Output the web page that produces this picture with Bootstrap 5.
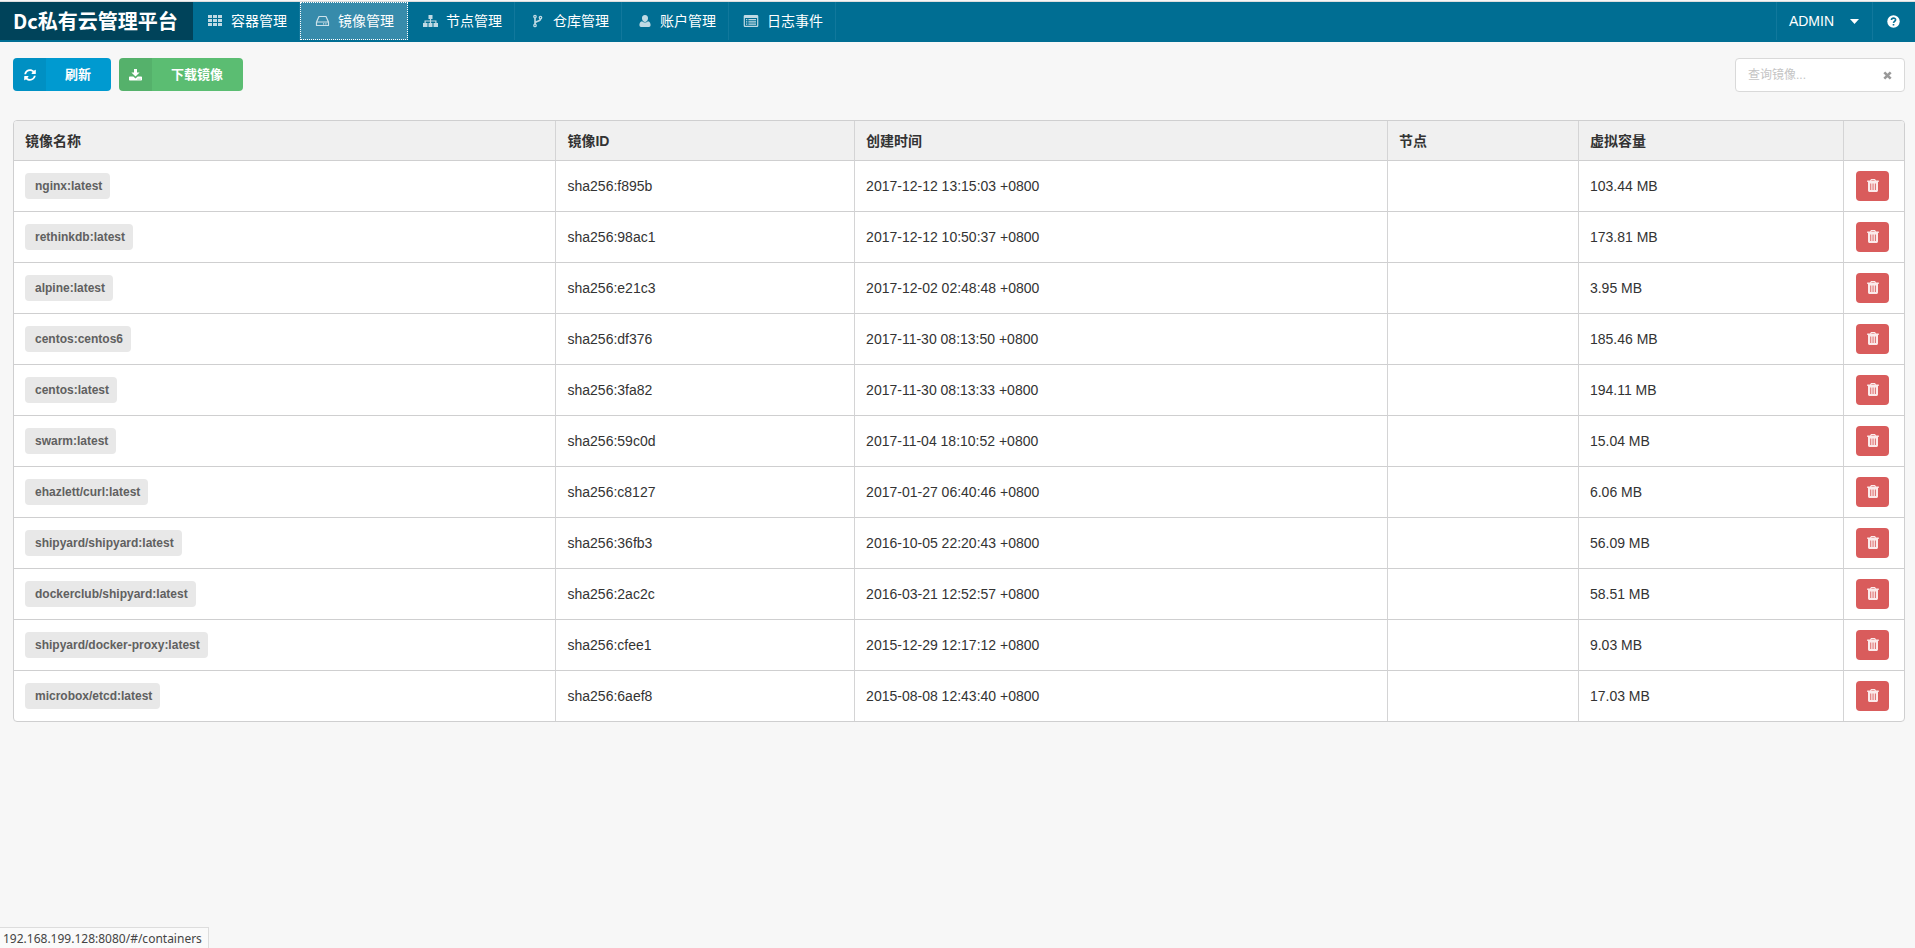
<!DOCTYPE html>
<html lang="zh-CN">
<head>
<meta charset="utf-8">
<meta name="viewport" content="width=device-width, initial-scale=1">
<title>Dc私有云管理平台</title>
<link href="https://cdn.jsdelivr.net/npm/bootstrap@5.3.0/dist/css/bootstrap.min.css" rel="stylesheet">
<style>
body{background:#f7f7f7;color:#333;font:14px/20px "Liberation Sans","Noto Sans CJK SC",sans-serif}
svg{fill:currentColor;flex:none}
.topbar{background:#006e93;border-top:1px solid #ddd;height:41px;padding-bottom:2px;color:#fff;margin-top:1px}
.topbar a,.topbar button{color:#fff;text-decoration:none}
.topbar .brand{background:#00435a;font:bold 20px/38px "Noto Sans CJK SC",sans-serif;padding:0 13px;width:193px;white-space:nowrap}
.menu-item{padding:0 12px 0 14px;gap:7px;border:0 solid #11789c;border-right-width:1px;white-space:nowrap}
.menu-item svg{width:17px;height:14px;opacity:.75}
.menu-item.active{background:#378bab;border:1px dotted #fff;padding:0 13px}
.menu-user{background:none;border:0 solid #11789c;border-left-width:1px;padding:0 13px 0 12px;gap:16px}
.menu-help{border-left:1px solid #11789c;padding:0 15px 0 14px}
.page{padding:16px 10px 0 13px}
.act{border:0;border-radius:4px;color:#fff;font-weight:bold;font-size:13px;height:33px;padding:0;overflow:hidden;line-height:33px}
.act .ico{width:33px;height:33px;background:rgba(0,0,0,.06)}
.act .txt{padding:0 20px 0 19px}
.act-blue{background:#009ad0}.act-green{background:#5bbd72}
.finder{width:170px;height:34px;border:1px solid #d9d9d9;border-radius:4px;background:#fff;padding:0 12px}
.finder input{border:0;outline:0;padding:0;font-size:12px;min-width:0;background:none}
.finder input::placeholder{color:#c4c4c4}
.finder button{border:0;background:none;padding:0;color:#999}
.frame{margin-top:28px;border:1px solid #cfcfd0;border-radius:4px;background:#fff;overflow:hidden}
.grid{table-layout:fixed;width:100%;border-collapse:separate;border-spacing:0}
.grid th,.grid td{padding:0 11px;border-left:1px solid #d4d4d5;border-top:1px solid #cfcfd0;height:51px}
.grid th{height:39px;background:#f0f0f0;border-top:0}
.grid th:first-child,.grid td:first-child{border-left:0}
.grid td:last-child{padding-left:12px}
.c-name{width:28.65%}.c-id{width:15.8%}.c-time{width:28.2%}.c-node{width:10.1%}.c-act{width:61px}
.tag{display:inline-block;background:#e8e8e8;color:#606060;border-radius:4px;font-weight:bold;font-size:12px;line-height:26px;padding:0 8px 0 10px;vertical-align:middle}
.del{display:flex;align-items:center;justify-content:center;width:33px;height:30px;border:0;border-radius:4px;background:#d95c5c;color:#fbeaea;padding:0 0 2px}
.statusline{left:0;bottom:0;height:21px;background:#fafafa;border:1px solid #ddd;border-width:1px 1px 0 0;font:12px/22px "Noto Sans",sans-serif;color:#444;padding:0 6px 0 3px}
</style>
</head>
<body>
<svg class="d-none" xmlns="http://www.w3.org/2000/svg">
<symbol id="trash" viewBox="0 0 12 13"><path fill-rule="evenodd" d="M4 0h4l1 1.6h2.8v1.3H11V11.6Q11 13 9.700 13H2.300Q1 13 1 11.600V2.900H.2V1.600H3zM4.600 1 4.200 1.600H7.800L7.400 1zM3.300 4.500V11h.9V4.500zM5.600 4.500V11h.9V4.500zM7.900 4.500V11h.9V4.500z"/></symbol>
</svg>
<header class="topbar d-flex align-items-stretch">
<a class="brand" href="#/">Dc私有云管理平台</a>
<nav class="d-flex flex-grow-1" aria-label="主菜单">
<a class="menu-item d-flex align-items-center" href="#/containers"><svg viewBox="0 0 17 14"><path d="M1 1h4v3H1zm5 0h4v3H6zm5 0h4v3h-4zM1 5h4v3H1zm5 0h4v3H6zm5 0h4v3h-4zM1 9h4v3H1zm5 0h4v3H6zm5 0h4v3h-4z"/></svg>容器管理</a>
<a class="menu-item active d-flex align-items-center" href="#/images" aria-current="page"><svg viewBox="0 0 17 14"><path d="M2.500 8 5 2.500H12L14.500 8V11.500H2.500V8H14.500" fill="none" stroke="currentColor" stroke-width="1.200" stroke-linejoin="round"/><path d="M9 9.200h1.200v1.200H9zm2.300 0h1.200v1.200h-1.200z"/></svg>镜像管理</a>
<a class="menu-item d-flex align-items-center" href="#/nodes"><svg viewBox="0 0 17 14"><path d="M6.500 1h4v4H9.100v1.400h5.400V9H16v4h-4.500V9h1.800V7.600H9.100V9h1.400v4h-4V9h1.400V7.600H3.700V9h1.800v4H1V9h1.500V6.400h5.400V5H6.500z"/></svg>节点管理</a>
<a class="menu-item d-flex align-items-center" href="#/registries"><svg viewBox="0 0 17 14" fill="none"><g fill="none" stroke="currentColor" stroke-width="1.300"><circle cx="6" cy="2.600" r="1.200"/><circle cx="6" cy="11.400" r="1.200"/><circle cx="11.500" cy="3.600" r="1.200"/><path d="M6 4v6M11.500 5C11.500 8 6 6.500 6 9.600" stroke-width="1.600"/></g></svg>仓库管理</a>
<a class="menu-item d-flex align-items-center" href="#/accounts"><svg viewBox="0 0 17 14"><path d="M9 1C11 1 12.200 2.500 12 4.500 11.800 6.500 10.500 8 9 8S6.200 6.500 6 4.500C5.800 2.500 7 1 9 1zM6 7.200Q9 10 12 7.200C14 7.600 14.600 9.500 14.600 11.300Q14.500 13 13 13H5Q3.500 13 3.400 11.300C3.400 9.500 4 7.600 6 7.200z"/></svg>账户管理</a>
<a class="menu-item d-flex align-items-center" href="#/events"><svg viewBox="0 0 17 14"><path fill-rule="evenodd" d="M2 1h12q1.300 0 1.300 1.300v9.400Q15.300 13 14 13H2Q.7 13 .7 11.700V2.300Q.7 1 2 1zM1.900 4v7.800h12.200V4zM3 5h1.300v1.200H3zm2.400 0H13v1.200H5.400zM3 7.300h1.300v1.200H3zm2.400 0H13v1.200H5.400zM3 9.600h1.300v1.200H3zm2.400 0H13v1.200H5.400z"/></svg>日志事件</a>
</nav>
<button class="menu-user d-flex align-items-center" type="button">ADMIN<svg width="9" height="5" viewBox="0 0 9 5"><path d="M0 0h9L4.500 5z"/></svg></button>
<a class="menu-help d-flex align-items-center" href="#/help" aria-label="帮助"><svg width="13" height="13" viewBox="0 0 13 13"><circle cx="6.500" cy="6.500" r="6.200"/><path d="M4.400 5C4.600 2.500 8.700 2.600 8.600 4.900 8.500 6.400 6.600 6.200 6.500 7.900M6.500 9v1.600" fill="none" stroke="#006e93" stroke-width="1.600"/></svg></a>
</header>
<main class="page">
<div class="d-flex justify-content-between align-items-start">
<div class="d-flex gap-2">
<button class="act act-blue d-flex" type="button"><span class="ico d-flex align-items-center justify-content-center"><svg width="12" height="12" viewBox="0 0 512 512"><path d="M370.720 133.280C339.458 104.008 298.888 87.962 255.848 88c-77.458.068-144.328 53.178-162.791 126.850-1.344 5.363-6.122 9.150-11.651 9.150H24.103c-7.498 0-13.194-6.807-11.807-14.176C33.933 94.924 134.813 8 256 8c66.448 0 126.791 26.136 171.315 68.685L463.030 40.970C478.149 25.851 504 36.559 504 57.941V192c0 13.255-10.745 24-24 24H345.941c-21.382 0-32.090-25.851-16.971-40.971zM32 296h134.059c21.382 0 32.090 25.851 16.971 40.971l-41.750 41.750c31.262 29.273 71.835 45.319 114.876 45.280 77.418-.07 144.315-53.144 162.787-126.849 1.344-5.363 6.122-9.150 11.651-9.150h57.304c7.498 0 13.194 6.807 11.807 14.176C478.067 417.076 377.187 504 256 504c-66.448 0-126.791-26.136-171.315-68.685L48.970 471.030C33.851 486.149 8 475.441 8 454.059V320c0-13.255 10.745-24 24-24z"/></svg></span><span class="txt">刷新</span></button>
<button class="act act-green d-flex" type="button"><span class="ico d-flex align-items-center justify-content-center"><svg width="13" height="12" viewBox="0 0 13 12"><path fill-rule="evenodd" d="M5 0h3v3.500h2.600L6.500 7.600 2.400 3.500H5zM.8 7.500h3.500L6.500 9.500 8.700 7.500h3.500q.8 0 .8.8v2.400q0 .8-.8.8H.8q-.8 0-.8-.8V8.300q0-.8.8-.8zM8.600 9.700v.9h.9v-.9zm1.900 0v.9h.9v-.9z"/></svg></span><span class="txt">下载镜像</span></button>
</div>
<div class="finder d-flex align-items-center">
<input class="flex-grow-1" type="text" placeholder="查询镜像..." aria-label="查询镜像">
<button class="d-flex" type="button" aria-label="清除"><svg width="9" height="9" viewBox="0 0 9 9"><path d="M1.300 1.300 7.700 7.700M7.700 1.300 1.300 7.700" stroke="currentColor" stroke-width="2.600"/></svg></button>
</div>
</div>
<div class="frame">
<table class="grid">
<thead><tr><th class="c-name">镜像名称</th><th class="c-id">镜像ID</th><th class="c-time">创建时间</th><th class="c-node">节点</th><th>虚拟容量</th><th class="c-act"></th></tr></thead>
<tbody>
<tr><td><span class="tag">nginx:latest</span></td><td>sha256:f895b</td><td>2017-12-12 13:15:03 +0800</td><td></td><td>103.44 MB</td><td><button class="del" type="button" aria-label="删除"><svg width="12" height="13"><use href="#trash"/></svg></button></td></tr>
<tr><td><span class="tag">rethinkdb:latest</span></td><td>sha256:98ac1</td><td>2017-12-12 10:50:37 +0800</td><td></td><td>173.81 MB</td><td><button class="del" type="button" aria-label="删除"><svg width="12" height="13"><use href="#trash"/></svg></button></td></tr>
<tr><td><span class="tag">alpine:latest</span></td><td>sha256:e21c3</td><td>2017-12-02 02:48:48 +0800</td><td></td><td>3.95 MB</td><td><button class="del" type="button" aria-label="删除"><svg width="12" height="13"><use href="#trash"/></svg></button></td></tr>
<tr><td><span class="tag">centos:centos6</span></td><td>sha256:df376</td><td>2017-11-30 08:13:50 +0800</td><td></td><td>185.46 MB</td><td><button class="del" type="button" aria-label="删除"><svg width="12" height="13"><use href="#trash"/></svg></button></td></tr>
<tr><td><span class="tag">centos:latest</span></td><td>sha256:3fa82</td><td>2017-11-30 08:13:33 +0800</td><td></td><td>194.11 MB</td><td><button class="del" type="button" aria-label="删除"><svg width="12" height="13"><use href="#trash"/></svg></button></td></tr>
<tr><td><span class="tag">swarm:latest</span></td><td>sha256:59c0d</td><td>2017-11-04 18:10:52 +0800</td><td></td><td>15.04 MB</td><td><button class="del" type="button" aria-label="删除"><svg width="12" height="13"><use href="#trash"/></svg></button></td></tr>
<tr><td><span class="tag">ehazlett/curl:latest</span></td><td>sha256:c8127</td><td>2017-01-27 06:40:46 +0800</td><td></td><td>6.06 MB</td><td><button class="del" type="button" aria-label="删除"><svg width="12" height="13"><use href="#trash"/></svg></button></td></tr>
<tr><td><span class="tag">shipyard/shipyard:latest</span></td><td>sha256:36fb3</td><td>2016-10-05 22:20:43 +0800</td><td></td><td>56.09 MB</td><td><button class="del" type="button" aria-label="删除"><svg width="12" height="13"><use href="#trash"/></svg></button></td></tr>
<tr><td><span class="tag">dockerclub/shipyard:latest</span></td><td>sha256:2ac2c</td><td>2016-03-21 12:52:57 +0800</td><td></td><td>58.51 MB</td><td><button class="del" type="button" aria-label="删除"><svg width="12" height="13"><use href="#trash"/></svg></button></td></tr>
<tr><td><span class="tag">shipyard/docker-proxy:latest</span></td><td>sha256:cfee1</td><td>2015-12-29 12:17:12 +0800</td><td></td><td>9.03 MB</td><td><button class="del" type="button" aria-label="删除"><svg width="12" height="13"><use href="#trash"/></svg></button></td></tr>
<tr><td><span class="tag">microbox/etcd:latest</span></td><td>sha256:6aef8</td><td>2015-08-08 12:43:40 +0800</td><td></td><td>17.03 MB</td><td><button class="del" type="button" aria-label="删除"><svg width="12" height="13"><use href="#trash"/></svg></button></td></tr>
</tbody>
</table>
</div>
</main>
<div class="statusline position-fixed">192.168.199.128:8080/#/containers</div>
<script src="https://cdn.jsdelivr.net/npm/bootstrap@5.3.0/dist/js/bootstrap.bundle.min.js"></script>
</body>
</html>
